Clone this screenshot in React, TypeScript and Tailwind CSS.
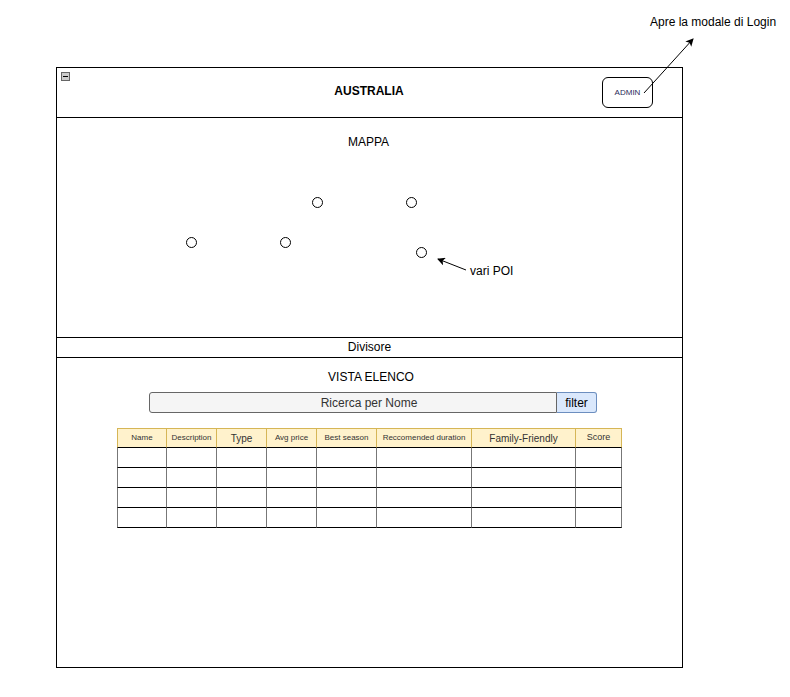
import React from 'react';

// POI markers on the map, coordinates relative to the map panel
const pois = [
  { x: 260, y: 84 },
  { x: 354, y: 84 },
  { x: 134, y: 124 },
  { x: 228, y: 124 },
  { x: 364, y: 134 },
];

const columns = [
  { label: 'Name', w: 'w-[50px]', size: 'text-[8px]' },
  { label: 'Description', w: 'w-[50px]', size: 'text-[8px]' },
  { label: 'Type', w: 'w-[50px]', size: 'text-[10px]' },
  { label: 'Avg price', w: 'w-[50px]', size: 'text-[8px]' },
  { label: 'Best season', w: 'w-[60px]', size: 'text-[8px]' },
  { label: 'Reccomended duration', w: 'w-[95px]', size: 'text-[8px]' },
  { label: 'Family-Friendly', w: 'w-[104px]', size: 'text-[10px]' },
  { label: 'Score', w: 'w-[46px]', size: 'text-[9px]' },
];

const Arrows = () => (
  <svg className="absolute inset-0 pointer-events-none" width="790" height="697">
    <defs>
      <marker id="head" markerWidth="8" markerHeight="8" refX="7" refY="4" orient="auto" markerUnits="userSpaceOnUse">
        <path d="M0,0 L8,4 L0,8 L2,4 Z" fill="#000" />
      </marker>
    </defs>
    <line x1="644" y1="93" x2="693" y2="39" stroke="#000" strokeWidth="1" markerEnd="url(#head)" />
    <line x1="466" y1="270" x2="438" y2="259" stroke="#000" strokeWidth="1" markerEnd="url(#head)" />
  </svg>
);

export default function App() {
  return (
    <div className="relative w-[790px] h-[697px] bg-white text-black overflow-hidden font-['Liberation_Sans',Arial,sans-serif]">
      <div className="absolute left-[650px] top-[15px] text-[12px] leading-[14px]">Apre la modale di Login</div>

      <div className="ml-[56px] pt-[67px]">
        <div className="w-[627px] h-[601px] border border-black flex flex-col">
          {/* header */}
          <div className="relative h-[50px] shrink-0 border-b border-black grid grid-cols-[1fr_auto_1fr] items-center">
            <div className="absolute left-[4px] top-[4px] w-[9px] h-[9px] border border-[#666] bg-[#ccc] flex items-center justify-center">
              <div className="w-[5px] h-[1px] bg-black" />
            </div>
            <div />
            <div className="text-[12px] font-bold leading-[14px] pb-[4px] pr-[1px]">AUSTRALIA</div>
            <div className="justify-self-end mr-[29px]">
              <div className="w-[51px] h-[31px] border border-black rounded-[6px] flex items-center justify-center text-[8px] text-[#2a2a5a] pt-[1px]">
                ADMIN
              </div>
            </div>
          </div>

          {/* map */}
          <div className="relative h-[220px] shrink-0 border-b border-black">
            <div className="text-center text-[12px] leading-[14px] pt-[17px] pr-[2px]">MAPPA</div>
            {pois.map((p, i) => (
              <div
                key={i}
                className="absolute w-[11px] h-[11px] rounded-full border border-black bg-white"
                style={{ left: p.x - 5.5, top: p.y - 5.5 }}
              />
            ))}
            <div className="absolute left-[413px] top-[146px] text-[12px] leading-[14px]">vari POI</div>
          </div>

          {/* divider */}
          <div className="h-[20px] shrink-0 border-b border-black flex items-center justify-center text-[12px] leading-[14px] pb-[1px]">
            Divisore
          </div>

          {/* list */}
          <div className="flex-1 flex flex-col">
            <div className="text-center text-[12px] leading-[14px] pt-[12px] pl-[3px]">VISTA ELENCO</div>
            <div className="ml-[92px] mt-[8px] flex w-[448px] h-[21px]">
              <div className="flex-1 bg-[#f5f5f5] border border-[#666] rounded-l-[3px] flex items-center justify-center pl-[32px] text-[12px] text-[#333]">
                Ricerca per Nome
              </div>
              <div className="w-[40px] bg-[#dae8fc] border border-[#6c8ebf] border-l-0 rounded-r-[3px] flex items-center justify-center text-[12px]">
                filter
              </div>
            </div>

            <div className="ml-[60px] mt-[15px] flex flex-col w-[505px]">
              <div className="flex h-[20px]">
                {columns.map((c) => (
                  <div
                    key={c.label}
                    className={`${c.w} ${c.size} bg-[#fff2cc] border-r border-[#d6b656] first:border-l flex items-center justify-center text-[#333] border-t border-t-[#d6b656] border-b border-b-black whitespace-nowrap`}
                  >
                    {c.label}
                  </div>
                ))}
              </div>
              {[0, 1, 2, 3].map((r) => (
                <div key={r} className="flex h-[20px]">
                  {columns.map((c) => (
                    <div key={c.label} className={`${c.w} border-r border-[#777] first:border-l first:border-l-[#777] border-b border-b-black`} />
                  ))}
                </div>
              ))}
            </div>
          </div>
        </div>
      </div>

      <Arrows />
    </div>
  );
}
